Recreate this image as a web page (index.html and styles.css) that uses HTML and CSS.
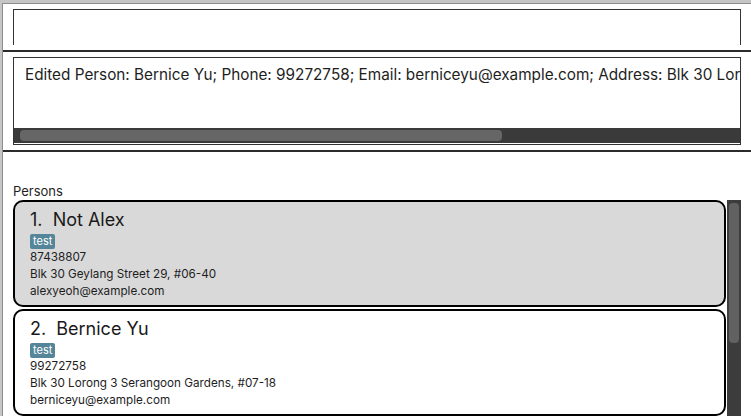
FILE: index.html
```html
<!DOCTYPE html>
<html>
<head>
<meta charset="utf-8">
<link rel="stylesheet" href="styles.css">
</head>
<body>
<div class="frame">
  <div class="app">
    <section class="command-section">
      <div class="command-box"></div>
    </section>
    <div class="divider"></div>
    <section class="result-section">
      <div class="result-box">
        <div class="result-text">Edited Person: Bernice Yu; Phone: 99272758; Email: berniceyu@example.com; Address: Blk 30 Lorong 3 Serangoon Gardens, #07-18; Tags: [test]</div>
        <div class="hscroll"><div class="hthumb"></div></div>
      </div>
    </section>
    <div class="divider"></div>
    <section class="persons-section">
      <div class="persons-label">Persons</div>
      <div class="list-wrap">
        <div class="list">
          <div class="card selected">
            <div class="name">1.&nbsp; Not Alex</div>
            <div class="tags"><span class="tag">test</span></div>
            <div class="field">87438807</div>
            <div class="field">Blk 30 Geylang Street 29, #06-40</div>
            <div class="field">alexyeoh@example.com</div>
          </div>
          <div class="card">
            <div class="name">2.&nbsp; Bernice Yu</div>
            <div class="tags"><span class="tag">test</span></div>
            <div class="field">99272758</div>
            <div class="field">Blk 30 Lorong 3 Serangoon Gardens, #07-18</div>
            <div class="field">berniceyu@example.com</div>
          </div>
        </div>
        <div class="vscroll"><div class="vthumb"></div></div>
      </div>
    </section>
  </div>
</div>
</body>
</html>
```
FILE: styles.css
```css
html, body {
  margin: 0;
  padding: 0;
  background: #ffffff;
  overflow: hidden;
}
body {
  font-family: Inter, Roboto, "Liberation Sans", sans-serif;
  color: #1e1e1e;
}
.frame {
  height: 416px;
  border-top: 3px solid #c6c6c6;
  border-left: 2px solid #c6c6c6;
  box-sizing: border-box;
  overflow: hidden;
}
.app {
  height: 100%;
  border-top: 1px solid #8e8e8e;
  border-left: 1px solid #8e8e8e;
  display: flex;
  flex-direction: column;
}
.command-section {
  padding: 5px 10px 0 10px;
  height: 41px;
  box-sizing: border-box;
}
.command-box {
  height: 36px;
  border: 1px solid #333;
  border-bottom: none;
  box-sizing: border-box;
}
.divider {
  height: 2px;
  background: #2b2b2b;
  flex: none;
}
.command-section + .divider { margin-top: 5px; }
.result-section {
  padding: 5px 10px 5px 10px;
}
.result-box {
  height: 88px;
  border: 1px solid #333;
  box-sizing: border-box;
  display: flex;
  flex-direction: column;
  overflow: hidden;
}
.result-text {
  flex: 1;
  white-space: nowrap;
  overflow: hidden;
  font-size: 15.3px;
  padding: 7px 0 0 11px;
  color: #1e1e1e;
}
.hscroll {
  height: 15px;
  background: #3a3a3a;
  margin: 0 0 1px 0;
  padding: 2px 0 0 6px;
  box-sizing: border-box;
}
.hthumb {
  width: 482px;
  height: 11px;
  border-radius: 4px;
  background: #666666;
}
.persons-section {
  flex: 1;
  display: flex;
  flex-direction: column;
  padding: 0 10px 0 10px;
  min-height: 0;
}
.persons-label {
  font-size: 13px;
  margin-top: 31px;
  line-height: 16px;
  color: #1e1e1e;
}
.list-wrap {
  display: flex;
  flex: 1;
  margin-top: 1px;
  min-height: 0;
}
.list {
  flex: 1;
  display: flex;
  flex-direction: column;
  gap: 2px;
}
.card {
  height: 107px;
  flex: none;
  box-sizing: border-box;
  border: 2px solid #000;
  border-radius: 10px;
  background: #ffffff;
  padding: 6px 15px 0 15px;
}
.card.selected {
  background: #d9d9d9;
}
.name {
  font-size: 18px;
  line-height: 24px;
  color: #1a1a1a;
}
.tags {
  height: 15px;
  margin: 2px 0 0 0;
  display: flex;
}
.tag {
  background: #558599;
  color: #ffffff;
  font-size: 11px;
  line-height: 15px;
  padding: 0 3px;
  border-radius: 2px;
}
.field {
  font-size: 11.7px;
  line-height: 17px;
  color: #1e1e1e;
}
.vscroll {
  width: 14px;
  margin-left: 1px;
  background: #3c3c3c;
  padding: 3px 2px 0 2px;
  box-sizing: border-box;
  flex: none;
}
.vthumb {
  height: 140px;
  background: #616161;
  border-radius: 4px;
}
```
